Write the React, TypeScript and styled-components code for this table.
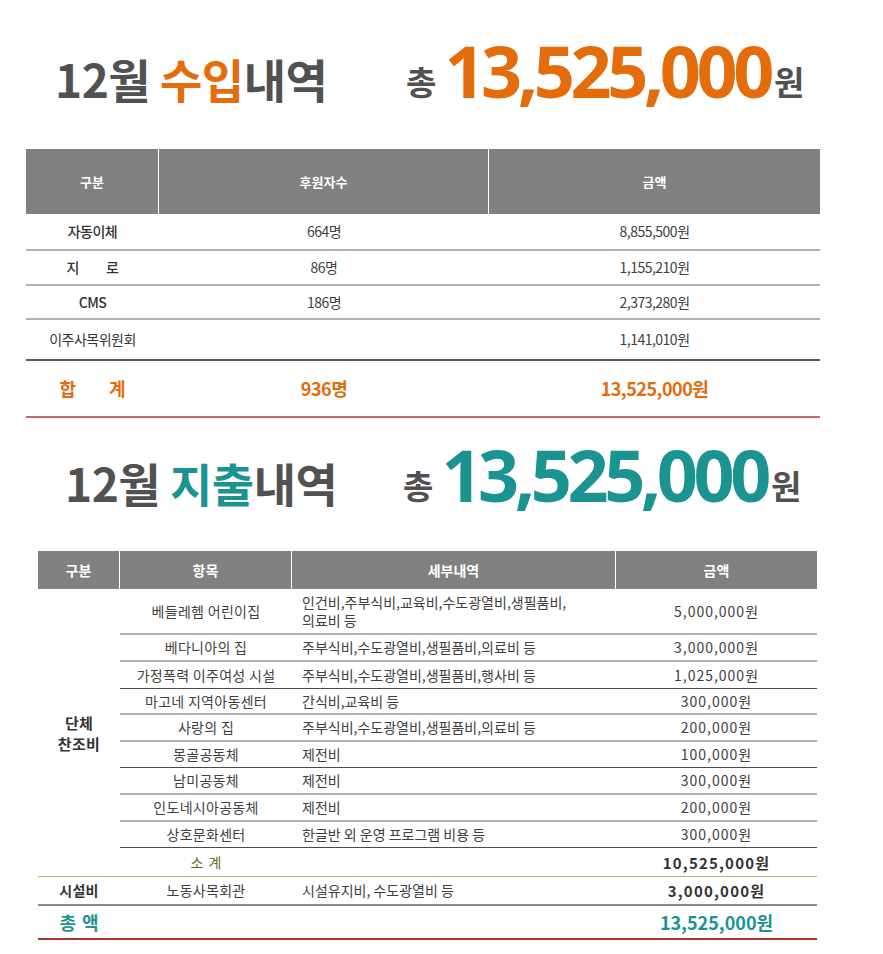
import React from 'react';
import styled, { createGlobalStyle } from 'styled-components';

const ORANGE = '#e46c0a';
const TEAL = '#1b9491';
const HEAD_GRAY = '#515151';
const KR = '"Noto Sans CJK KR", "Noto Sans", sans-serif';

const GlobalStyle = createGlobalStyle`
  body {
    margin: 0;
    background: #fff;
    font-family: ${KR};
    color: #404040;
  }
`;

type Line = 'light' | 'dark' | 'darkThin' | 'red' | 'deepRed' | 'olive' | 'mid' | 'none';

const LINES: Record<Line, string> = {
  light: '2px solid #b1b1b1',
  dark: '2px solid #5a5a5a',
  darkThin: '1px solid #4a4a4a',
  red: '2px solid #c86a63',
  deepRed: '2px solid #a8322c',
  olive: '1px solid #a4bd73',
  mid: '2px solid #8a8a8a',
  none: '0',
};

const Page = styled.div`
  width: 883px;
  padding-bottom: 14px;
`;

const Heading = styled.div<{ $left: number; $top: number }>`
  display: flex;
  align-items: baseline;
  height: 72px;
  padding: ${p => p.$top}px 0 0 ${p => p.$left}px;
  line-height: 1;
`;

const Title = styled.h2<{ $width: number }>`
  margin: 0;
  width: ${p => p.$width}px;
  font-family: ${KR};
  font-size: 46px;
  font-weight: 700;
  letter-spacing: -0.5px;
  color: ${HEAD_GRAY};
`;

const Accent = styled.span<{ $color: string }>`
  color: ${p => p.$color};
`;

const Unit = styled.span`
  position: relative;
  top: -3px;
  font-family: ${KR};
  font-size: 33px;
  font-weight: 700;
  color: ${HEAD_GRAY};
`;

const BigNumber = styled.span<{ $color: string }>`
  margin: 0 4px 0 8px;
  font-family: "Noto Sans", sans-serif;
  font-size: 72px;
  font-weight: 700;
  letter-spacing: -4.5px;
  color: ${p => p.$color};
`;

const Table = styled.table<{ $left: number; $width: number; $top: number }>`
  margin: ${p => p.$top}px 0 0 ${p => p.$left}px;
  width: ${p => p.$width}px;
  border-collapse: separate;
  border-spacing: 0;
  table-layout: fixed;
`;

const Col = styled.col<{ $w: number }>`
  width: ${p => p.$w}px;
`;

const HeadRow = styled.tr<{ $h: number }>`
  height: ${p => p.$h}px;
`;

const HeadCell = styled.th<{ $last?: boolean; $size: number }>`
  padding: 0;
  background-color: #808080;
  background-image: repeating-conic-gradient(#7b7b7b 0 25%, #868686 0 50%);
  background-size: 2px 2px;
  border-right: ${p => (p.$last ? '0' : '1px solid #fff')};
  color: #fff;
  font-size: ${p => p.$size}px;
  font-weight: 700;
  text-align: center;
`;

const Row = styled.tr<{ $h: number }>`
  height: ${p => p.$h}px;
`;

const Cell = styled.td<{
  $line: Line;
  $align?: 'left' | 'center';
  $size?: number;
  $weight?: number;
  $color?: string;
  $spacing?: number;
  $lh?: number;
}>`
  padding: ${p => (p.$align === 'left' ? '0 0 0 10px' : '0')};
  border-bottom: ${p => LINES[p.$line]};
  text-align: ${p => p.$align ?? 'center'};
  vertical-align: middle;
  font-size: ${p => p.$size ?? 14}px;
  font-weight: ${p => p.$weight ?? 400};
  color: ${p => p.$color ?? '#404040'};
  letter-spacing: ${p => p.$spacing ?? 0}px;
  line-height: ${p => p.$lh ?? 17}px;
  white-space: nowrap;
`;

const Spread = styled.span<{ $gap: number }>`
  display: inline-flex;
  gap: ${p => p.$gap}px;
`;

const spread = (text: string, gap: number) => (
  <Spread $gap={gap}>
    {text.split('').map((ch, i) => (
      <span key={i}>{ch}</span>
    ))}
  </Spread>
);

type IncomeRow = { name: React.ReactNode; count: string; amount: string; h: number; line: Line; bold: boolean };

const income: IncomeRow[] = [
  { name: '자동이체', count: '664명', amount: '8,855,500원', h: 37, line: 'light', bold: true },
  { name: spread('지로', 27), count: '86명', amount: '1,155,210원', h: 35, line: 'light', bold: true },
  { name: 'CMS', count: '186명', amount: '2,373,280원', h: 34, line: 'light', bold: true },
  { name: '이주사목위원회', count: '', amount: '1,141,010원', h: 41, line: 'dark', bold: false },
];

type Spend = { item: string; detail: string[]; amount: string; h: number; line: Line };

const support: Spend[] = [
  { item: '베들레헴 어린이집', detail: ['인건비,주부식비,교육비,수도광열비,생필품비,', '의료비 등'], amount: '5,000,000원', h: 46, line: 'light' },
  { item: '베다니아의 집', detail: ['주부식비,수도광열비,생필품비,의료비 등'], amount: '3,000,000원', h: 27, line: 'light' },
  { item: '가정폭력 이주여성 시설', detail: ['주부식비,수도광열비,생필품비,행사비 등'], amount: '1,025,000원', h: 27, line: 'darkThin' },
  { item: '마고네 지역아동센터', detail: ['간식비,교육비 등'], amount: '300,000원', h: 26, line: 'light' },
  { item: '사랑의 집', detail: ['주부식비,수도광열비,생필품비,의료비 등'], amount: '200,000원', h: 27, line: 'light' },
  { item: '몽골공동체', detail: ['제전비'], amount: '100,000원', h: 26, line: 'darkThin' },
  { item: '남미공동체', detail: ['제전비'], amount: '300,000원', h: 27, line: 'light' },
  { item: '인도네시아공동체', detail: ['제전비'], amount: '200,000원', h: 27, line: 'light' },
  { item: '상호문화센터', detail: ['한글반 외 운영 프로그램 비용 등'], amount: '300,000원', h: 26, line: 'darkThin' },
];

const SectionHeading = ({ left, top, width, label, color }: { left: number; top: number; width: number; label: string; color: string }) => (
  <Heading $left={left} $top={top}>
    <Title $width={width}>
      12월 <Accent $color={color}>{label}</Accent>내역
    </Title>
    <Unit>총</Unit>
    <BigNumber $color={color}>13,525,000</BigNumber>
    <Unit>원</Unit>
  </Heading>
);

const App = () => {
  return (
    <Page>
      <GlobalStyle />
      <SectionHeading left={55} top={34} width={351} label="수입" color={ORANGE} />

      <Table $left={26} $width={794} $top={43}>
        <colgroup>
          <Col $w={133} />
          <Col $w={330} />
          <Col $w={331} />
        </colgroup>
        <thead>
          <HeadRow $h={65}>
            <HeadCell $size={13}>구분</HeadCell>
            <HeadCell $size={13}>후원자수</HeadCell>
            <HeadCell $size={13} $last>금액</HeadCell>
          </HeadRow>
        </thead>
        <tbody>
          {income.map((r, i) => (
            <Row key={i} $h={r.h}>
              <Cell $line={r.line} $weight={r.bold ? 500 : 400} $color="#333" $spacing={-0.5}>{r.name}</Cell>
              <Cell $line={r.line} $spacing={-0.5}>{r.count}</Cell>
              <Cell $line={r.line} $spacing={-0.5}>{r.amount}</Cell>
            </Row>
          ))}
          <Row $h={57}>
            <Cell $line="red" $size={18} $weight={700} $color={ORANGE}>{spread('합계', 33)}</Cell>
            <Cell $line="red" $size={18} $weight={700} $color={ORANGE} $spacing={-0.5}>936명</Cell>
            <Cell $line="red" $size={18} $weight={700} $color={ORANGE} $spacing={-0.5}>13,525,000원</Cell>
          </Row>
        </tbody>
      </Table>

      <SectionHeading left={65} top={20} width={338} label="지출" color={TEAL} />

      <Table $left={38} $width={779} $top={41}>
        <colgroup>
          <Col $w={82} />
          <Col $w={172} />
          <Col $w={324} />
          <Col $w={201} />
        </colgroup>
        <thead>
          <HeadRow $h={38}>
            <HeadCell $size={14}>구분</HeadCell>
            <HeadCell $size={14}>항목</HeadCell>
            <HeadCell $size={14}>세부내역</HeadCell>
            <HeadCell $size={14} $last>금액</HeadCell>
          </HeadRow>
        </thead>
        <tbody>
          {support.map((r, i) => (
            <Row key={i} $h={r.h}>
              {i === 0 && (
                <Cell rowSpan={support.length + 1} $line="olive" $size={15} $weight={700} $color="#333" $spacing={0.3} $lh={21}>
                  단체
                  <br />
                  찬조비
                </Cell>
              )}
              <Cell $line={r.line} $spacing={0.3}>{r.item}</Cell>
              <Cell $line={r.line} $align="left" $lh={r.detail.length > 1 ? 18 : 17}>
                {r.detail.map((d, j) => (
                  <React.Fragment key={j}>
                    {j > 0 && <br />}
                    {d}
                  </React.Fragment>
                ))}
              </Cell>
              <Cell $line={r.line} $spacing={1}>{r.amount}</Cell>
            </Row>
          ))}
          <Row $h={29}>
            <Cell $line="olive" $color="#5b6f1f">{spread('소계', 5)}</Cell>
            <Cell $line="olive" $align="left" />
            <Cell $line="olive" $size={15} $weight={700} $color="#333" $spacing={1.2}>10,525,000원</Cell>
          </Row>
          <Row $h={29}>
            <Cell $line="mid" $weight={700} $color="#333" $spacing={0.3}>시설비</Cell>
            <Cell $line="mid" $spacing={0.3}>노동사목회관</Cell>
            <Cell $line="mid" $align="left">시설유지비, 수도광열비 등</Cell>
            <Cell $line="mid" $size={15} $weight={700} $color="#333" $spacing={1.2}>3,000,000원</Cell>
          </Row>
          <Row $h={34}>
            <Cell $line="deepRed" $size={18} $weight={700} $color={TEAL}>{spread('총액', 6)}</Cell>
            <Cell $line="deepRed" />
            <Cell $line="deepRed" />
            <Cell $line="deepRed" $size={18} $weight={700} $color={TEAL}>13,525,000원</Cell>
          </Row>
        </tbody>
      </Table>
    </Page>
  );
};

export default App;
